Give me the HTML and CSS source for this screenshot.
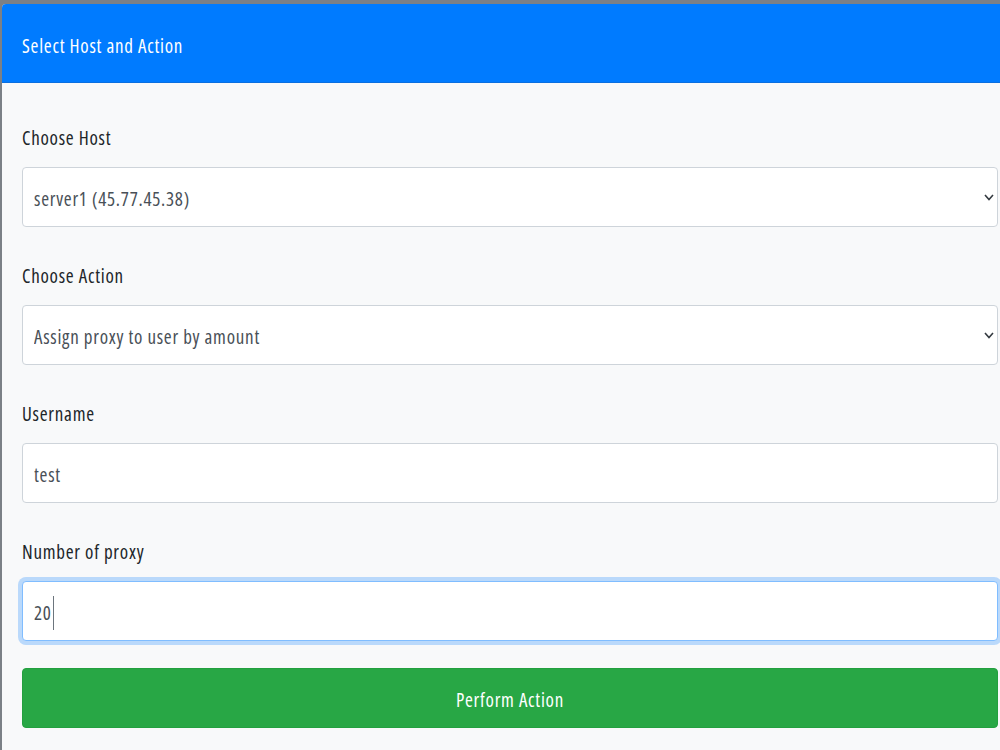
FILE: index.html
```html
<!DOCTYPE html>
<html lang="en">
<head>
    <meta charset="UTF-8">
    <meta name="viewport" content="width=device-width, initial-scale=1.0">
    <title>Proxy Manager</title>
    <link rel="stylesheet" href="styles.css">
</head>
<body>
    <div class="card">
        <div class="card-header">Select Host and Action</div>

        <form class="card-body">
            <div class="form-group">
                <label for="host">Choose Host</label>
                <div class="field-wrap">
                    <select id="host" class="form-control">
                        <option>server1 (45.77.45.38)</option>
                    </select>
                    <svg class="chevron" width="10" height="7" viewBox="0 0 10 7"><path d="M1 1l4 4.5L9 1" fill="none" stroke="#343a40" stroke-width="1.6"/></svg>
                </div>
            </div>

            <div class="form-group">
                <label for="action">Choose Action</label>
                <div class="field-wrap">
                    <select id="action" class="form-control">
                        <option>Assign proxy to user by amount</option>
                    </select>
                    <svg class="chevron" width="10" height="7" viewBox="0 0 10 7"><path d="M1 1l4 4.5L9 1" fill="none" stroke="#343a40" stroke-width="1.6"/></svg>
                </div>
            </div>

            <div class="form-group">
                <label for="username">Username</label>
                <input id="username" class="form-control" type="text" value="test">
            </div>

            <div class="form-group last">
                <label for="amount">Number of proxy</label>
                <div class="field-wrap">
                    <input id="amount" class="form-control focused" type="text" value="20">
                    <span class="caret"></span>
                </div>
            </div>

            <button type="button" class="btn-success">Perform Action</button>
        </form>
    </div>
</body>
</html>
```

FILE: styles.css
```css
html, body {
    height: 100%;
}
body {
    margin: 0;
    background-color: #7b8086;
    font-family: 'Open Sans', Lato, sans-serif;
    font-stretch: 75%;
    font-size: 19px;
    letter-spacing: 0.75px;
    color: #212529;
    overflow: hidden;
}
.card {
    margin: 4px 0 0 2px;
    width: 1016px;
    min-height: 760px;
    background-color: #f8f9fa;
    border-top-left-radius: 4px;
    overflow: hidden;
}
.card-header {
    background-color: #007bff;
    color: #fff;
    height: 78px;
    line-height: 84px;
    padding-left: 20px;
    border-bottom: 1px solid #0a6fe0;
}
.card-body {
    padding: 40px 20px 20px 20px;
}
.form-group {
    margin-bottom: 34px;
}
.form-group.last {
    margin-bottom: 27px;
}
label {
    display: block;
    height: 28px;
    line-height: 30px;
    margin-bottom: 16px;
}
.field-wrap {
    position: relative;
}
.form-control {
    display: block;
    box-sizing: border-box;
    width: 100%;
    height: 60px;
    padding: 4px 11px 0 11px;
    font-family: inherit;
    font-stretch: inherit;
    font-size: 19px;
    letter-spacing: inherit;
    color: #495057;
    background-color: #fff;
    border: 1px solid #ced4da;
    border-radius: 4px;
    outline: none;
    appearance: none;
    -webkit-appearance: none;
}
.chevron {
    position: absolute;
    right: 4px;
    top: 27px;
    pointer-events: none;
}
.focused {
    border-color: #80bdff;
    box-shadow: 0 0 0 4px rgba(0, 123, 255, 0.25);
}
.caret {
    position: absolute;
    left: 31px;
    top: 15px;
    width: 1px;
    height: 34px;
    background-color: #6c757d;
}
.btn-success {
    display: block;
    width: 100%;
    height: 60px;
    padding-top: 4px;
    background-color: #28a745;
    border: 1px solid #23a03f;
    border-radius: 4px;
    color: #fff;
    font-family: inherit;
    font-stretch: inherit;
    font-size: 19px;
    letter-spacing: inherit;
    cursor: pointer;
}
```
